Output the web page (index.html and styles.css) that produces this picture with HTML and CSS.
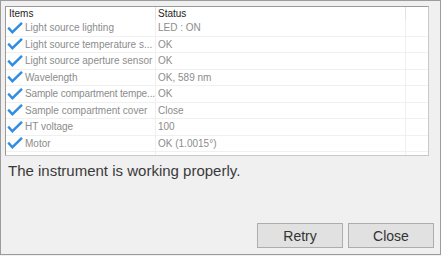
FILE: index.html
```html
<!DOCTYPE html>
<html>
<head>
<meta charset="utf-8">
<link rel="stylesheet" href="styles.css">
</head>
<body>
<div class="window">
  <div class="listbox">
    <div class="row head">
      <div class="c1"><span class="htext">Items</span></div>
      <div class="c2">Status</div>
      <div class="c3"></div>
    </div>
    <div class="row">
      <div class="c1"><svg class="chk" viewBox="0 0 16 12"><path d="M1.2 5.6 L5.4 10.2 L15 0.8"/></svg><span>Light source lighting</span></div>
      <div class="c2">LED : ON</div><div class="c3"></div>
    </div>
    <div class="row">
      <div class="c1"><svg class="chk" viewBox="0 0 16 12"><path d="M1.2 5.6 L5.4 10.2 L15 0.8"/></svg><span>Light source temperature s...</span></div>
      <div class="c2">OK</div><div class="c3"></div>
    </div>
    <div class="row">
      <div class="c1"><svg class="chk" viewBox="0 0 16 12"><path d="M1.2 5.6 L5.4 10.2 L15 0.8"/></svg><span>Light source aperture sensor</span></div>
      <div class="c2">OK</div><div class="c3"></div>
    </div>
    <div class="row">
      <div class="c1"><svg class="chk" viewBox="0 0 16 12"><path d="M1.2 5.6 L5.4 10.2 L15 0.8"/></svg><span>Wavelength</span></div>
      <div class="c2">OK, 589 nm</div><div class="c3"></div>
    </div>
    <div class="row">
      <div class="c1"><svg class="chk" viewBox="0 0 16 12"><path d="M1.2 5.6 L5.4 10.2 L15 0.8"/></svg><span class="tight">Sample compartment tempe...</span></div>
      <div class="c2">OK</div><div class="c3"></div>
    </div>
    <div class="row">
      <div class="c1"><svg class="chk" viewBox="0 0 16 12"><path d="M1.2 5.6 L5.4 10.2 L15 0.8"/></svg><span>Sample compartment cover</span></div>
      <div class="c2">Close</div><div class="c3"></div>
    </div>
    <div class="row">
      <div class="c1"><svg class="chk" viewBox="0 0 16 12"><path d="M1.2 5.6 L5.4 10.2 L15 0.8"/></svg><span>HT voltage</span></div>
      <div class="c2">100</div><div class="c3"></div>
    </div>
    <div class="row">
      <div class="c1"><svg class="chk" viewBox="0 0 16 12"><path d="M1.2 5.6 L5.4 10.2 L15 0.8"/></svg><span>Motor</span></div>
      <div class="c2">OK (1.0015°)</div><div class="c3"></div>
    </div>
    <div class="row filler">
      <div class="c1"></div><div class="c2"></div><div class="c3"></div>
    </div>
  </div>
  <p class="message">The instrument is working properly.</p>
  <div class="buttons">
    <button class="btn">Retry</button>
    <button class="btn">Close</button>
  </div>
</div>
</body>
</html>
```
FILE: styles.css
```css
html, body {
  margin: 0;
  padding: 0;
  background: #f0f0f0;
}
body {
  width: 441px;
  height: 256px;
  overflow: hidden;
  font-family: "Liberation Sans", Arial, sans-serif;
}
.window {
  box-sizing: border-box;
  width: 441px;
  height: 255px;
  border: 1px solid #9c9c9c;
  background: #f0f0f0;
  padding: 5px 6px 0 4px;
  display: flex;
  flex-direction: column;
}
.listbox {
  box-sizing: border-box;
  width: 424px;
  height: 150px;
  border: 1px solid #9a9a9a;
  border-right-color: #c8c8c8;
  border-bottom-color: #c8c8c8;
  background: #fff;
  display: flex;
  flex-direction: column;
  overflow: hidden;
}
.row {
  display: flex;
  height: 16.5px;
  border-bottom: 1px solid #f0f0f0;
  box-sizing: border-box;
  font-size: 10px;
  color: #8c8c8c;
  flex: none;
}
.row.head {
  height: 13px;
  border-bottom: none;
  color: #1e1e1e;
}
.row.filler {
  flex: 1;
  border-bottom: none;
}
.c1 {
  width: 149px;
  border-right: 1px solid #f0f0f0;
  display: flex;
  align-items: center;
  white-space: nowrap;
}
.head .c1, .head .c2 {
  border-right-color: #e2e2e2;
}
.c2 {
  width: 247px;
  border-right: 1px solid #f0f0f0;
  display: flex;
  align-items: center;
  padding-left: 2px;
  white-space: nowrap;
}
.c3 {
  flex: 1;
}
.htext {
  padding-left: 3px;
}
.tight {
  letter-spacing: -0.15px;
}
.chk {
  width: 16px;
  height: 12px;
  margin-left: 1px;
  margin-right: 2px;
  flex: none;
}
.chk path {
  fill: none;
  stroke: #2f8de4;
  stroke-width: 2.4;
  stroke-linejoin: miter;
}
.message {
  margin: 5px 0 0 3px;
  font-size: 15px;
  line-height: 20px;
  color: #3a3a3a;
}
.buttons {
  margin-top: auto;
  margin-bottom: 6px;
  display: flex;
  justify-content: flex-end;
  gap: 5px;
}
.btn {
  box-sizing: border-box;
  width: 86px;
  height: 25px;
  background: #e1e1e1;
  border: 1px solid #adadad;
  font-family: "Liberation Sans", Arial, sans-serif;
  font-size: 14px;
  color: #333;
  padding: 0;
}
```
